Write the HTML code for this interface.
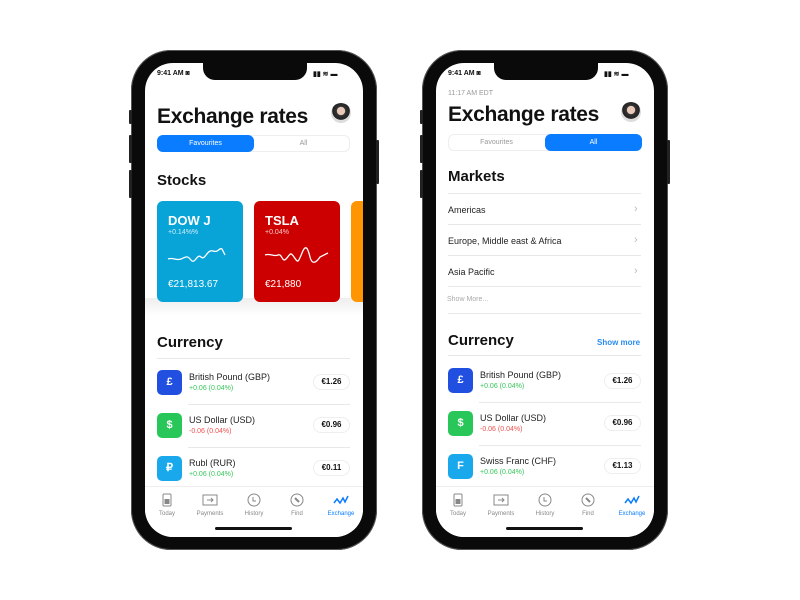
<!DOCTYPE html>
<html><head><meta charset="utf-8"><style>
*{margin:0;padding:0;box-sizing:border-box}
body{width:800px;height:600px;background:#fff;position:relative;overflow:hidden;font-family:"Liberation Sans",sans-serif;color:#111}
.phone{position:absolute;top:50px;width:246px;height:500px;background:#0a0a0a;border-radius:40px;box-shadow:0 0 0 1px #555 inset}
.btn{position:absolute;background:#222;width:3px;border-radius:1px}
.screen{position:absolute;top:63px;width:218px;height:474px;background:#fff;border-radius:28px;overflow:hidden}
.a{position:absolute;white-space:nowrap}
.notch{position:absolute;left:58px;top:-2px;width:104px;height:19px;background:#0a0a0a;border-radius:0 0 12px 12px}
.title{font-size:21px;font-weight:bold;letter-spacing:-0.3px;line-height:24px}
.h2{font-size:15px;font-weight:bold;line-height:18px}
.seg{position:absolute;left:12px;width:193px;height:17px;border:1px solid #eee;border-radius:6px;font-size:7px;color:#999}
.seg div{position:absolute;top:-1px;height:17px;width:97px;line-height:17px;text-align:center;border-radius:6px}
.card{position:absolute;top:138px;width:86px;height:101px;border-radius:6px;color:#fff}
.ico{position:absolute;left:12px;width:25px;height:25px;border-radius:5px;color:#fff;font-size:11px;font-weight:bold;text-align:center;line-height:25px}
.nm{font-size:9px;color:#222}
.sub{font-size:7px}
.pill{position:absolute;left:168px;width:37px;height:16px;border:1px solid #eee;border-radius:8px;font-size:8px;font-weight:bold;text-align:center;line-height:14px}
.line{position:absolute;height:1px;background:#e8e8e8}
.tab{position:absolute;top:423px;left:0;width:218px;height:51px;border-top:1px solid #eee;background:#fff}
.ti{position:absolute;top:6px;width:40px;text-align:center;font-size:6px;color:#888}
.ti svg{display:block;margin:0 auto 4px}
.home{position:absolute;left:70px;top:464px;width:77px;height:3px;background:#111;border-radius:2px}
.mk{font-size:9px;color:#222}
.chev{position:absolute;left:198px;font-size:11px;color:#bbb}
</style></head><body>

<!-- LEFT PHONE -->
<div class="phone" style="left:131px"></div>
<div class="btn" style="left:129px;top:110px;height:14px"></div>
<div class="btn" style="left:129px;top:135px;height:28px"></div>
<div class="btn" style="left:129px;top:170px;height:28px"></div>
<div class="btn" style="left:376px;top:140px;height:44px"></div>
<div class="screen" style="left:145px">
 <div class="notch"></div>
 <div class="a" style="left:12px;top:7px;font-size:7px;font-weight:bold">9:41 AM ◙</div>
 <div class="a" style="left:168px;top:7px;font-size:7px;font-weight:bold">▮▮ ≋ ▬</div>
 <div class="a title" style="left:12px;top:42px">Exchange rates</div>
 <div class="a" style="left:186px;top:40px;width:20px;height:20px;border-radius:50%;background:radial-gradient(circle at 50% 40%,#e8c8b8 25%,#333 28%,#222 55%,#ddd 58%)"></div>
 <div class="seg" style="top:72px"><div style="left:-1px;background:#0a7cff;color:#fff">Favourites</div><div style="left:97px">All</div></div>
 <div class="a h2" style="left:12px;top:109px">Stocks</div>
 <div class="a" style="left:0;top:235px;width:218px;height:18px;background:linear-gradient(#eee,#fff)"></div>
 <div class="card" style="left:12px;background:#08a4d8">
  <div class="a" style="left:11px;top:12px;font-size:13px;font-weight:bold">DOW J</div>
  <div class="a" style="left:11px;top:28px;font-size:7px;opacity:.8">+0.14%%</div>
  <svg class="a" style="left:10px;top:44px" width="62" height="20"><path d="M1 14 C6 12 9 16 14 14 S20 10 24 15 S30 8 34 12 S40 4 46 6 S52 2 55 4 L58 10" stroke="#fff" stroke-width="1.3" fill="none"/></svg>
  <div class="a" style="left:11px;top:78px;font-size:10px">€21,813.67</div>
 </div>
 <div class="card" style="left:109px;background:#cc0000">
  <div class="a" style="left:11px;top:12px;font-size:13px;font-weight:bold">TSLA</div>
  <div class="a" style="left:11px;top:28px;font-size:7px;opacity:.8">+0.04%</div>
  <svg class="a" style="left:10px;top:44px" width="66" height="20"><path d="M1 10 C6 8 10 12 14 10 S18 18 22 14 S26 6 30 12 S34 18 38 8 S44 4 46 12 S52 18 56 12 L64 8" stroke="#fff" stroke-width="1.3" fill="none"/></svg>
  <div class="a" style="left:11px;top:78px;font-size:10px">€21,880</div>
 </div>
 <div class="card" style="left:206px;background:#ff9500"></div>
 <div class="a h2" style="left:12px;top:271px">Currency</div>
 <div class="line" style="left:12px;top:295px;width:193px"></div>
 <div class="ico" style="top:307px;background:#2150e0">£</div>
 <div class="a nm" style="left:44px;top:309px">British Pound (GBP)</div>
 <div class="a sub" style="left:44px;top:322px;color:#35c759">+0.06 (0.04%)</div>
 <div class="pill" style="top:311px">€1.26</div>
 <div class="line" style="left:43px;top:341px;width:162px"></div>
 <div class="ico" style="top:350px;background:#29c75a">$</div>
 <div class="a nm" style="left:44px;top:352px">US Dollar (USD)</div>
 <div class="a sub" style="left:44px;top:365px;color:#f05050">-0.06 (0.04%)</div>
 <div class="pill" style="top:354px">€0.96</div>
 <div class="line" style="left:43px;top:384px;width:162px"></div>
 <div class="ico" style="top:393px;background:#1aa8ec">₽</div>
 <div class="a nm" style="left:44px;top:395px">Rubl (RUR)</div>
 <div class="a sub" style="left:44px;top:408px;color:#35c759">+0.06 (0.04%)</div>
 <div class="pill" style="top:397px">€0.11</div>
 <div class="tab">
  <div class="ti" style="left:2px"><svg width="12" height="14"><rect x="2" y="1" width="8" height="12" rx="1" fill="none" stroke="#888"/><rect x="3.5" y="6" width="5" height="5" fill="#888"/></svg>Today</div>
  <div class="ti" style="left:45px"><svg width="16" height="14"><rect x="1" y="2" width="14" height="10" fill="none" stroke="#888"/><path d="M5 7h6M9 5l2 2-2 2" stroke="#888" fill="none"/></svg>Payments</div>
  <div class="ti" style="left:89px"><svg width="14" height="14"><circle cx="7" cy="7" r="6" fill="none" stroke="#888"/><path d="M6 4v4h3" stroke="#888" fill="none"/></svg>History</div>
  <div class="ti" style="left:132px"><svg width="14" height="14"><circle cx="7" cy="7" r="6" fill="none" stroke="#888"/><path d="M5 5l4 4" stroke="#888" stroke-width="2"/></svg>Find</div>
  <div class="ti" style="left:176px;color:#0a7cff"><svg width="16" height="14"><path d="M1 10l3-4 3 4 3-5 2 4 3-6" stroke="#0a7cff" stroke-width="1.5" fill="none"/></svg>Exchange</div>
 </div>
 <div class="home"></div>
</div>

<!-- RIGHT PHONE -->
<div class="phone" style="left:422px"></div>
<div class="btn" style="left:420px;top:110px;height:14px"></div>
<div class="btn" style="left:420px;top:135px;height:28px"></div>
<div class="btn" style="left:420px;top:170px;height:28px"></div>
<div class="btn" style="left:667px;top:140px;height:44px"></div>
<div class="screen" style="left:436px">
 <div class="notch"></div>
 <div class="a" style="left:12px;top:7px;font-size:7px;font-weight:bold">9:41 AM ◙</div>
 <div class="a" style="left:168px;top:7px;font-size:7px;font-weight:bold">▮▮ ≋ ▬</div>
 <div class="a" style="left:12px;top:27px;font-size:7px;color:#999">11:17 AM EDT</div>
 <div class="a title" style="left:12px;top:40px">Exchange rates</div>
 <div class="a" style="left:185px;top:39px;width:20px;height:20px;border-radius:50%;background:radial-gradient(circle at 50% 40%,#e8c8b8 25%,#333 28%,#222 55%,#ddd 58%)"></div>
 <div class="seg" style="top:71px"><div style="left:-1px">Favourites</div><div style="left:96px;background:#0a7cff;color:#fff">All</div></div>
 <div class="a h2" style="left:12px;top:105px">Markets</div>
 <div class="line" style="left:12px;top:130px;width:193px"></div>
 <div class="a mk" style="left:12px;top:142px">Americas</div><div class="a chev" style="top:140px">›</div>
 <div class="line" style="left:12px;top:161px;width:193px"></div>
 <div class="a mk" style="left:12px;top:173px">Europe, Middle east &amp; Africa</div><div class="a chev" style="top:171px">›</div>
 <div class="line" style="left:12px;top:192px;width:193px"></div>
 <div class="a mk" style="left:12px;top:204px">Asia Pacific</div><div class="a chev" style="top:202px">›</div>
 <div class="line" style="left:12px;top:223px;width:193px"></div>
 <div class="a" style="left:11px;top:233px;font-size:7px;color:#aaa">Show More...</div>
 <div class="line" style="left:12px;top:250px;width:193px"></div>
 <div class="a h2" style="left:12px;top:269px">Currency</div>
 <div class="a" style="left:161px;top:275px;font-size:8px;font-weight:bold;color:#2a8cf0">Show more</div>
 <div class="line" style="left:12px;top:292px;width:193px"></div>
 <div class="ico" style="top:305px;background:#2150e0">£</div>
 <div class="a nm" style="left:44px;top:307px">British Pound (GBP)</div>
 <div class="a sub" style="left:44px;top:320px;color:#35c759">+0.06 (0.04%)</div>
 <div class="pill" style="top:310px">€1.26</div>
 <div class="line" style="left:43px;top:339px;width:162px"></div>
 <div class="ico" style="top:348px;background:#29c75a">$</div>
 <div class="a nm" style="left:44px;top:350px">US Dollar (USD)</div>
 <div class="a sub" style="left:44px;top:363px;color:#f05050">-0.06 (0.04%)</div>
 <div class="pill" style="top:352px">€0.96</div>
 <div class="line" style="left:43px;top:382px;width:162px"></div>
 <div class="ico" style="top:391px;background:#1aa8ec">F</div>
 <div class="a nm" style="left:44px;top:393px">Swiss Franc (CHF)</div>
 <div class="a sub" style="left:44px;top:406px;color:#35c759">+0.06 (0.04%)</div>
 <div class="pill" style="top:395px">€1.13</div>
 <div class="tab">
  <div class="ti" style="left:2px"><svg width="12" height="14"><rect x="2" y="1" width="8" height="12" rx="1" fill="none" stroke="#888"/><rect x="3.5" y="6" width="5" height="5" fill="#888"/></svg>Today</div>
  <div class="ti" style="left:45px"><svg width="16" height="14"><rect x="1" y="2" width="14" height="10" fill="none" stroke="#888"/><path d="M5 7h6M9 5l2 2-2 2" stroke="#888" fill="none"/></svg>Payments</div>
  <div class="ti" style="left:89px"><svg width="14" height="14"><circle cx="7" cy="7" r="6" fill="none" stroke="#888"/><path d="M6 4v4h3" stroke="#888" fill="none"/></svg>History</div>
  <div class="ti" style="left:132px"><svg width="14" height="14"><circle cx="7" cy="7" r="6" fill="none" stroke="#888"/><path d="M5 5l4 4" stroke="#888" stroke-width="2"/></svg>Find</div>
  <div class="ti" style="left:176px;color:#0a7cff"><svg width="16" height="14"><path d="M1 10l3-4 3 4 3-5 2 4 3-6" stroke="#0a7cff" stroke-width="1.5" fill="none"/></svg>Exchange</div>
 </div>
 <div class="home"></div>
</div>
</body></html>
